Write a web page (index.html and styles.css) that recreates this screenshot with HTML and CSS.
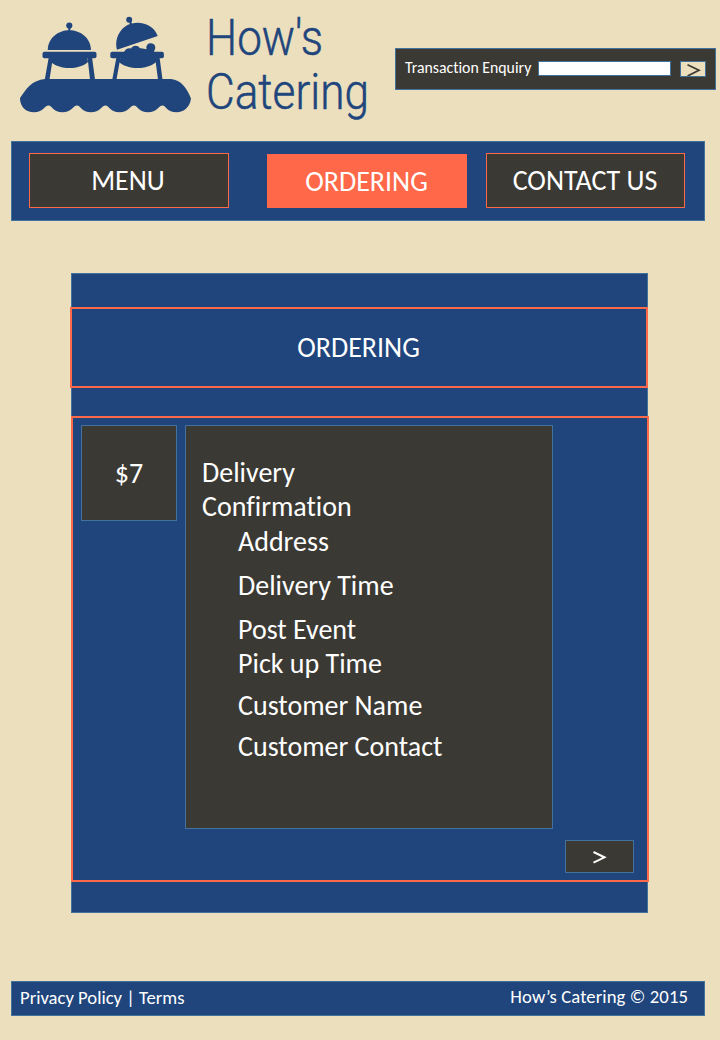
FILE: index.html
```html
<!DOCTYPE html>
<html lang="en">
<head>
<meta charset="utf-8">
<title>How's Catering</title>
<link rel="stylesheet" href="styles.css">
</head>
<body>
<header class="header">
  <svg class="logo" width="395" height="141" viewBox="0 0 395 141" role="img" aria-label="How's Catering">
    <g fill="#20457c">
      <path d="M45 79H171C181 80 187 88 191 98.500C190 107 184 112.300 176.500 112.300C167 112.300 166 105.500 162.500 105.500C158.500 105.500 157 112.300 148 112.300C139 112.300 137.500 105.500 134 105.500C130 105.500 128.500 112.300 119.500 112.300C110.500 112.300 109 105.500 105.500 105.500C101.500 105.500 100 112.300 91 112.300C82 112.300 80.500 105.500 77 105.500C73 105.500 71.500 112.300 62.500 112.300C53.500 112.300 52 105.500 48.500 105.500C44.500 105.500 43 112.300 34 112.300C26 112.300 20 107 20 98C26 89 32 80 45 79Z"/>
      <circle cx="69.300" cy="25.500" r="3.100"/>
      <path d="M68.300 27h2v4h-2zM47.800 50C48 38 58 30.200 69.300 30.200S91 38 91 50Z"/>
      <rect x="42.500" y="51.700" width="54" height="6.600" rx="2"/>
      <path d="M48.800 57H53L49.500 79.500H44.800ZM87.500 57H92L95 79.500H90ZM51 62L53 57H87L88 62C79 70 60 70 51 62Z"/>
      <circle cx="129.200" cy="19.800" r="3"/>
      <path d="M129 21l2-.6 1 4-2 .5zM117 49.800C114 38 121 26 132 23.500C143 21 154 26 157.700 36Z"/>
      <rect x="110.300" y="51.700" width="53.600" height="6.600" rx="2"/>
      <path d="M116.500 57H120.500L116.500 79.500H112.300ZM155 57H159.500L162.500 79.500H158ZM119 62L121 57H155L156 62C147 70 128 70 119 62Z"/>
      <path d="M124 52C126 48.500 128 48 131 48.500C133 45 138 45 140 48.300C143 48 144 49 146.500 49.300C145 42 154 42 155 46C156 49 154 50 154 52.500Z"/>
    </g>
    <text class="logo-text" x="206" y="55" textLength="117" lengthAdjust="spacingAndGlyphs">How's</text>
    <text class="logo-text" x="206" y="108.500" textLength="163" lengthAdjust="spacingAndGlyphs">Catering</text>
  </svg>
  <form class="enquiry">
    <label class="enquiry-label" for="enquiry">Transaction Enquiry</label>
    <input class="enquiry-input" id="enquiry" type="text">
    <button class="enquiry-go" type="button" aria-label="Search">
      <svg width="24" height="14" viewBox="0 0 24 14"><path d="M6.500 2.700L18 8.300L6.500 14" fill="none" stroke="#3b3933" stroke-width="1.700"/></svg>
    </button>
  </form>
</header>
<nav class="nav">
  <a class="nav-item menu">MENU</a>
  <a class="nav-item active">ORDERING</a>
  <a class="nav-item contact">CONTACT US</a>
</nav>
<main class="panel">
  <h1 class="panel-title"><span>ORDERING</span></h1>
  <section class="order">
    <div class="price">$7</div>
    <div class="details">
      <p class="heading-one">Delivery</p>
      <p class="heading-two">Confirmation</p>
      <ul class="fields">
        <li class="address">Address</li>
        <li class="time">Delivery Time</li>
        <li class="post">Post Event</li>
        <li class="pickup">Pick up Time</li>
        <li class="name">Customer Name</li>
        <li class="phone">Customer Contact</li>
      </ul>
    </div>
    <button class="next" type="button" aria-label="Next">
      <svg width="67" height="31" viewBox="0 0 67 31"><path d="M27.500 11L38.500 16.300L27.500 21.700" fill="none" stroke="#fff" stroke-width="2"/></svg>
    </button>
  </section>
</main>
<footer class="footer">
  <span class="legal">Privacy Policy | Terms</span>
  <span class="copyright">How’s Catering © 2015</span>
</footer>
</body>
</html>
```

FILE: styles.css
```css
* { box-sizing: border-box; }

body {
  margin: 0;
  width: 720px;
  height: 1040px;
  background: #ecdfbd;
  color: #fff;
  font-family: Calibri, Carlito, Lato, sans-serif;
  font-size: 28px;
  line-height: 34px;
  font-variant-ligatures: none;
  white-space: nowrap;
}

p, ul, h1 { margin: 0; padding: 0; font-weight: 400; font-size: inherit; }
ul { list-style: none; }
svg { display: block; }
button { padding: 0; }

.header { display: flex; height: 141px; }
.logo { flex: none; }
.logo-text {
  font-family: Roboto, sans-serif;
  font-weight: 300;
  font-size: 50px;
  fill: #20457c;
  stroke: #20457c;
  stroke-width: 0.5px;
}

.enquiry {
  display: flex;
  flex: none;
  width: 321px;
  height: 42px;
  margin-top: 48px;
  padding: 12px 9px 0;
  background: #3b3933;
  border: 1px solid #41719c;
}
.enquiry-label { width: 133px; font-size: 15.800px; line-height: 13px; }
.enquiry-input { width: 133px; height: 15px; padding: 0; background: #fff; border: 1px solid #41719c; }
.enquiry-go { width: 26px; height: 16px; margin-left: 9px; background: #ecdfbd; border: 1px solid #41719c; }

.nav {
  display: flex;
  width: 694px;
  height: 80px;
  margin-left: 11px;
  padding: 11px 0 0 17px;
  background: #20457c;
  border: 1px solid #41719c;
}
.nav-item {
  width: 200px;
  height: 55px;
  padding-top: 10px;
  text-align: center;
  background: #3b3933;
  border: 1px solid #ff6848;
}
.nav-item.menu { padding-right: 2px; }
.nav-item.active { height: 54px; margin: 1px 19px 0 38px; padding-right: 1px; background: #ff6848; }
.nav-item.contact { width: 199px; padding-right: 1px; }

.panel {
  width: 577px;
  height: 640px;
  margin: 52px 0 0 71px;
  padding-top: 33px;
  background: #20457c;
  border: 1px solid #41719c;
}
.panel-title {
  width: 578px;
  height: 81px;
  margin-left: -2px;
  padding: 22px 1px 0 0;
  text-align: center;
  border: 2px solid #ff6848;
}
.order {
  display: grid;
  grid-template-columns: 96px 368px 69px;
  grid-template-rows: 404px 33px;
  column-gap: 8px;
  row-gap: 11px;
  width: 578px;
  height: 466px;
  margin: 28px 0 0 -1px;
  padding: 7px 0 0 8px;
  border: 2px solid #ff6848;
}
.price { height: 96px; padding-top: 31px; text-align: center; background: #3b3933; border: 1px solid #41719c; }
.details { padding: 30px 0 0 16px; background: #3b3933; border: 1px solid #41719c; }
.fields { padding: 1px 0 0 36px; }
.time, .post { margin-top: 10px; }
.name { margin-top: 8px; }
.phone { margin-top: 7px; }
.next { grid-area: 2 / 3; width: 69px; height: 33px; margin-left: 4px; background: #3b3933; border: 1px solid #41719c; }

.footer {
  display: flex;
  justify-content: space-between;
  width: 694px;
  height: 35px;
  margin: 68px 0 0 11px;
  padding: 0 16px 0 8px;
  background: #20457c;
  border: 1px solid #41719c;
  font-size: 18.670px;
}
.legal { line-height: 31px; }
.copyright { line-height: 29px; letter-spacing: 0.1px; }
```
